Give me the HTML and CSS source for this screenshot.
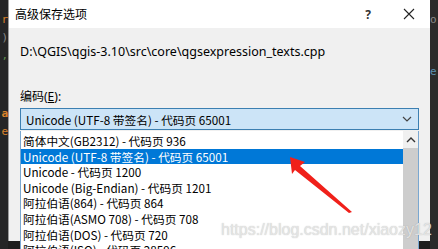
FILE: index.html
```html
<!DOCTYPE html>
<html lang="zh-CN">

<head>
    <meta charset="UTF-8">
    <title>高级保存选项</title>
    <link rel="stylesheet" href="styles.css">
</head>

<body>
    <div class="screen">
        <div class="editor-strip left">
            <span class="tok orange">r</span>
            <span class="tok gray">)</span>
            <span class="tok green">,</span>
            <span class="tok orange big">a</span>
            <span class="tok orange">e</span>
        </div>

        <div class="dialog">
            <div class="titlebar">
                <span class="title">高级保存选项</span>
                <span class="title-btn help">?</span>
                <span class="title-btn close">
                    <svg width="12" height="12" viewBox="0 0 12 12">
                        <path d="M1 1 L11 11 M11 1 L1 11" stroke="#222" stroke-width="1.1" fill="none" />
                    </svg>
                </span>
            </div>

            <div class="content">
                <p class="path">D:\QGIS\qgis-3.10\src\core\qgsexpression_texts.cpp</p>
                <p class="label">编码(<u>E</u>):</p>

                <div class="combo">
                    <span>Unicode (UTF-8 带签名) - 代码页 65001</span>
                    <svg class="chevron" width="10" height="6" viewBox="0 0 10 6">
                        <path d="M1 1 L5 5 L9 1" stroke="#444" stroke-width="1.2" fill="none" />
                    </svg>
                </div>

                <div class="dropdown">
                    <ul class="options">
                        <li>简体中文(GB2312) - 代码页 936</li>
                        <li class="selected">Unicode (UTF-8 带签名) - 代码页 65001</li>
                        <li>Unicode - 代码页 1200</li>
                        <li>Unicode (Big-Endian) - 代码页 1201</li>
                        <li>阿拉伯语(864) - 代码页 864</li>
                        <li>阿拉伯语(ASMO 708) - 代码页 708</li>
                        <li>阿拉伯语(DOS) - 代码页 720</li>
                        <li>阿拉伯语(ISO) - 代码页 28596</li>
                    </ul>
                    <div class="scrollbar">
                        <svg class="arrow-up" width="10" height="6" viewBox="0 0 10 6">
                            <path d="M1 5 L5 1 L9 5" stroke="#333" stroke-width="1.4" fill="none" />
                        </svg>
                        <div class="thumb"></div>
                    </div>
                </div>
            </div>
        </div>

        <div class="editor-strip right">
            <span class="tok gray">o</span>
            <span class="tok blue">e</span>
        </div>
    </div>

    <!-- annotation arrow drawn over the screenshot -->
    <svg class="red-arrow" width="438" height="249" viewBox="0 0 438 249">
        <path d="M290 157 L305 162 L300 166 L352 212 L349 213 L295 170 L292 174 Z" fill="#f0201a" />
    </svg>

    <div class="watermark">https://blog.csdn.net/xiaozy12</div>
</body>

</html>
```

FILE: styles.css
```css
body {
    margin: 0;
    background-color: #1e1e1e;
    font-family: "Noto Sans", "Noto Sans CJK SC", sans-serif;
    font-size: 12px;
    color: #000;
    overflow: hidden;
}

.screen {
    display: flex;
    width: 438px;
    height: 249px;
}

.editor-strip {
    width: 8px;
    background-color: #252526;
    display: flex;
    flex-direction: column;
    gap: 6px;
    padding-top: 12px;
    overflow: hidden;
    font-family: "DejaVu Sans Mono", monospace;
    font-size: 11px;
    line-height: 12px;
}

.editor-strip.left {
    align-items: flex-end;
    padding-top: 14px;
}

.editor-strip.right {
    width: 8px;
    background-color: #2b2b2b;
    padding-top: 14px;
    gap: 40px;
}

.tok {
    display: block;
}

.tok.orange {
    color: #d9822b;
}

.tok.big {
    margin-top: 40px;
    font-weight: bold;
}

.tok.gray {
    color: #8a8a8a;
}

.tok.green {
    color: #5f8f4f;
}

.tok.blue {
    color: #5b8fb0;
}

.dialog {
    width: 422px;
    height: 241px;
    background-color: #f0f0f0;
    border-left: 1px solid #9a9a9a;
    display: flex;
    flex-direction: column;
    box-sizing: border-box;
}

.titlebar {
    height: 28px;
    background-color: #fff;
    display: flex;
    align-items: center;
    padding-left: 6px;
    flex-shrink: 0;
}

.title {
    flex: 1;
    font-size: 12px;
}

.title-btn {
    text-align: center;
}

.help {
    width: 40px;
    font-weight: bold;
    font-size: 12px;
    color: #333;
}

.close {
    width: 42px;
    display: flex;
    justify-content: center;
}

.content {
    padding: 15px 11px 0 11px;
}

.content p {
    margin: 0;
}

.path {
    font-size: 12.5px;
    line-height: 18px;
}

.label {
    margin-top: 27px !important;
    line-height: 18px;
}

.combo {
    height: 22px;
    margin-top: 2px;
    background-color: #cce4f7;
    border: 1px solid #3c7fb1;
    box-sizing: border-box;
    display: flex;
    align-items: center;
    justify-content: space-between;
    padding: 0 6px 0 5px;
    font-family: "Noto Sans CJK SC", sans-serif;
    font-size: 11.7px;
}

.dropdown {
    display: flex;
    height: 125px;
    background-color: #fff;
    border-left: 1px solid #7aa7d0;
    border-right: 1px solid #7aa7d0;
    margin-top: 1px;
}

.options {
    list-style: none;
    margin: 0;
    padding: 2px 0 0 0;
    flex: 1;
    font-family: "Noto Sans CJK SC", sans-serif;
    font-size: 11.7px;
}

.options li {
    height: 15.6px;
    line-height: 15.6px;
    padding-left: 2px;
    white-space: nowrap;
}

.options li.selected {
    background-color: #0078d7;
    color: #fff;
}

.scrollbar {
    width: 15px;
    display: flex;
    flex-direction: column;
    align-items: center;
    background-color: #f0f0f0;
}

.arrow-up {
    margin-top: 6px;
    margin-bottom: 5px;
}

.thumb {
    width: 15px;
    flex: 1;
    background-color: #cdcdcd;
}

.red-arrow {
    position: absolute;
    left: 0;
    top: 0;
}

.watermark {
    position: absolute;
    left: 221px;
    top: 221px;
    font-family: "Liberation Sans", sans-serif;
    font-size: 16px;
    color: rgba(235, 235, 235, 0.85);
    text-shadow: 0 0 1px rgba(120, 120, 120, 0.5);
}
```
